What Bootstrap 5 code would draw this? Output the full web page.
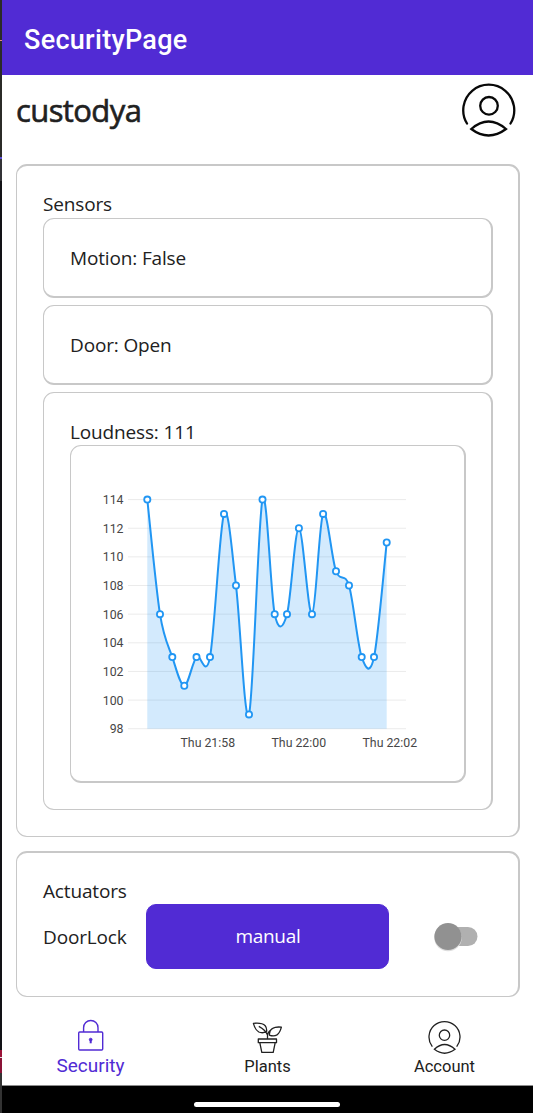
<!DOCTYPE html>
<html lang="en">
<head>
<meta charset="utf-8">
<meta name="viewport" content="width=device-width, initial-scale=1">
<title>SecurityPage</title>
<link href="https://cdn.jsdelivr.net/npm/bootstrap@5.3.0/dist/css/bootstrap.min.css" rel="stylesheet">
<style>
:root{--brand:#512bd4;--ink:#212121;--line:#c8c8c8}
body{font-family:"Open Sans",sans-serif;font-size:19px;line-height:26px;letter-spacing:-.15px;color:var(--ink);background:#fff;height:1113px;overflow:hidden}
svg{display:block}
.edge{width:2px;flex:none;background:linear-gradient(#2b2b28 0 40px,#e08a80 40px 41px,#2b2b28 41px 157px,#5a4bd8 157px 159px,#333336 159px 181px,#121216 181px 1050px,#9a1238 1050px 1057px,#ddd 1057px 1058px,#8a1236 1058px 1073px,#333 1073px)}
.topbar{background:var(--brand);height:75px;padding:4px 22px 0}
.topbar .navbar-brand{font:500 27px/34px Roboto,sans-serif;letter-spacing:.3px;margin:0;padding:0;color:#fff}
.brand-row{height:89px;padding:8px 16px 0 14px}
.brand-row h1{font-size:31px;line-height:40px;font-weight:400;-webkit-text-stroke:.6px var(--ink);margin:7px 0 0;letter-spacing:-.6px}
.panel{border:1px solid var(--line);border-top-width:2px;border-right-width:2px;border-radius:11px;padding:26px;background:#fff}
.stack{margin:0 13px 0 14px}
.outer{padding:25px 25px 26px 26px}
.caption-line{padding-bottom:1px}
.sub{border-top-width:1px;height:80px;border-bottom-width:2px;margin-bottom:7px}
.chartbox{padding:0;height:338px;border:1px solid var(--line);border-bottom-width:2px;border-right-width:2px}
.loud{height:418px;padding:26px 25px 26px 26px;border-top-width:1px}
.chart text{font:12.3px Roboto,sans-serif;letter-spacing:0;fill:#464646}
.btn-mode{--bs-btn-bg:var(--brand);--bs-btn-color:#fff;--bs-btn-border-color:var(--brand);width:243px;height:65px;border-radius:10px;font-size:19px;letter-spacing:-.3px;margin-left:19.4px}
.lockname{width:84px;white-space:nowrap}
.toggle{margin-left:43.6px}
.tabs{height:89px;font-family:Roboto,sans-serif;letter-spacing:0;padding-bottom:1px;border-bottom:1px solid #8c8c8c}
.tabs .nav-link{padding:0;color:var(--ink);width:177px;font-size:16.5px;line-height:26px}
.tabs .nav-link.active{color:var(--brand);font-size:19px;line-height:24px}
.tabs svg{height:36px;margin:21px auto 0}
.sysbar{height:27px;padding:12px 2px 0 0}
.pill{width:146px;height:5px}
</style>
<script src="https://cdn.jsdelivr.net/npm/bootstrap@5.3.0/dist/js/bootstrap.bundle.min.js"></script>
</head>
<body class="d-flex">
<div class="edge"></div>
<div class="flex-grow-1 d-flex flex-column">
  <nav class="navbar topbar d-flex align-items-center"><span class="navbar-brand">SecurityPage</span></nav>
  <header class="brand-row d-flex justify-content-between align-items-start">
    <h1>custodya</h1>
    <svg width="56" height="56" viewBox="0 0 56 56" fill="none" stroke="#080808" stroke-width="2.3" stroke-linecap="round"><path d="M6 40.5A25.5 25.5 0 1 1 49.5 40.5M10.3 46Q27.5 31 45 46Q27.5 59 10.3 46Z"/><circle cx="28" cy="22.8" r="8.8"/></svg>
  </header>
  <main>
    <section class="panel outer stack" style="height:673px">
      <div class="caption-line">Sensors</div>
      <div class="panel sub">Motion: False</div>
      <div class="panel sub">Door: Open</div>
      <div class="panel loud">
        <div>Loudness: 111</div>
        <div class="panel chartbox"><svg class="chart" id="chart" width="392" height="335" viewBox="71 446 392 335"></svg></div>
      </div>
    </section>
    <section class="panel outer stack" style="height:146px;margin-top:14px">
      <div>Actuators</div>
      <div class="d-flex align-items-center">
        <span class="lockname">DoorLock</span>
        <button class="btn btn-mode" type="button">manual</button>
        <svg class="toggle flex-shrink-0" width="46" height="34" viewBox="433 920 46 34"><rect x="440" y="927" width="37.5" height="19" rx="9.5" fill="#b0b0b0"/><circle cx="448" cy="937.5" r="13.8" fill="#ddd"/><circle cx="448" cy="936.5" r="13.6" fill="#919191"/></svg>
      </div>
    </section>
  </main>
  <nav class="nav tabs flex-nowrap text-center">
    <a class="nav-link active" href="#"><svg width="36" viewBox="73 1017 36 36" fill="none" stroke="#512bd4" stroke-width="1.4"><rect x="78.7" y="1031" width="24" height="18" rx="1"/><path d="M83.6 1031v-4.3a7.2 7.2 0 0 1 14.4 0v4.3"/><path d="M90.7 1038.6v3.7" stroke-width="2"/><circle cx="90.7" cy="1038.6" r="1.4" fill="#512bd4" stroke-width=".8"/></svg>Security</a>
    <a class="nav-link" href="#"><svg width="36" viewBox="250 1017 36 36" fill="none" stroke="#212121" stroke-width="1.3" stroke-linejoin="round"><path d="M258.3 1038h18.2v3.7h-18.2zM259.8 1041.7l2 9.7h11.4l2-9.7M267.5 1038v-4.5q.7-3.5 6.5-6.7M267.5 1034q-2-5-8.7-8.6M253.4 1022.3q8.5-1 11.8 2.4 1.8 2 1.4 6-4.2 1.9-7.8.3-3.6-2-5.4-8.7ZM281.4 1026.2q-1.5 5.7-4.4 7.7-3.3 1.9-7.6.2-.4-4.4 2.9-6.6 3.7-2 9.1-1.3Z"/></svg>Plants</a>
    <a class="nav-link" href="#"><svg width="36" viewBox="427 1017 36 36" fill="none" stroke="#212121" stroke-width="1.3" stroke-linecap="round"><path d="M432 1045.2A15.5 15.5 0 1 1 457 1045.2M434.4 1048.3Q444.5 1038.8 455 1048.3Q444.5 1056.2 434.4 1048.3Z"/><circle cx="444.5" cy="1034.2" r="5.2"/></svg>Account</a>
  </nav>
  <footer class="sysbar bg-black d-flex justify-content-center align-items-start"><div class="pill bg-white rounded-pill mt-1 flex-shrink-0"></div></footer>
</div>
<script>
const xs=[147.3,160,172.3,184.3,196.5,210,224,236,249,262.5,274.7,287,298.9,312,323.1,336,349,361.7,374,386.7];
const vals=[114,106,103,101,103,103,113,108,99,114,106,106,112,106,113,109,108,103,103,111];
const yOf=v=>499.6+(114-v)*14.32;
const pts=xs.map((x,i)=>[x,yOf(vals[i])]);
// smoothed cubic through all the readings
const smooth=.65,mid=(a,b)=>[(a[0]+b[0])/2,(a[1]+b[1])/2];
let line=`M${pts[0]}`;
for(let i=0;i<pts.length-1;i++){
  const p0=pts[Math.max(i-1,0)],p1=pts[i],p2=pts[i+1],p3=pts[Math.min(i+2,pts.length-1)];
  const a=mid(p0,p1),b=mid(p1,p2),c=mid(p2,p3);
  const m1=mid(a,b),m2=mid(b,c);
  const c1=m1.map((v,j)=>(b[j]-v)*smooth+p1[j]),c2=m2.map((v,j)=>(b[j]-v)*smooth+p2[j]);
  line+=`C${c1} ${c2} ${p2}`;
}
let s='';
for(let v=98;v<=114;v+=2)s+=`<path d="M128 ${yOf(v)}H406" stroke="#ebebeb"/><text x="123.5" y="${yOf(v)+4.5}" text-anchor="end">${v}</text>`;
s+=`<path d="${line}V${yOf(98)}H${xs[0]}Z" fill="#2196f3" fill-opacity=".2"/><path d="${line}" fill="none" stroke="#2196f3" stroke-width="2"/>`;
pts.forEach(p=>s+=`<circle cx="${p[0]}" cy="${p[1]}" r="3.1" fill="#fff" stroke="#2196f3" stroke-width="1.8"/>`);
[['21:58',207.8],['22:00',298.8],['22:02',389.8]].forEach(t=>s+=`<text x="${t[1]}" y="746.5" text-anchor="middle">Thu ${t[0]}</text>`);
document.getElementById('chart').innerHTML=s;
</script>
</body>
</html>
